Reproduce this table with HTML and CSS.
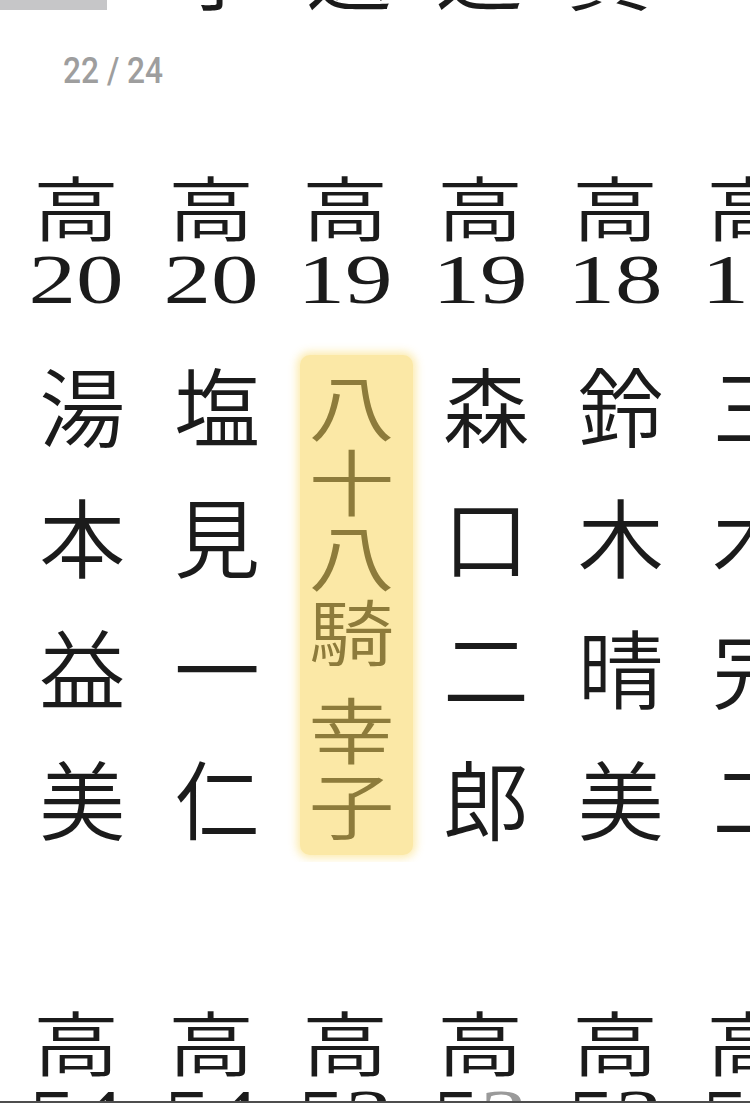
FILE: index.html
```html
<!DOCTYPE html>
<html lang="ja">
<head>
<meta charset="utf-8">
<title>22 / 24</title>
<link rel="stylesheet" href="styles.css">
</head>
<body>
<div class="topbar">
  <div class="tab"></div>
  <div class="title">予選通賞</div>
</div>
<div class="pager"><span>22 / 24</span></div>

<div class="block">
  <div class="col">
    <div class="hk"><span>高</span></div>
    <div class="hn"><span>20</span></div>
    <div class="names"><div>湯</div><div>本</div><div>益</div><div>美</div></div>
  </div>
  <div class="col">
    <div class="hk"><span>高</span></div>
    <div class="hn"><span>20</span></div>
    <div class="names"><div>塩</div><div>見</div><div>一</div><div>仁</div></div>
  </div>
  <div class="col">
    <div class="hk"><span>高</span></div>
    <div class="hn"><span>19</span></div>
    <div class="names">
      <div class="box">
        <div class="c"><span>八</span></div>
        <div class="c"><span>十</span></div>
        <div class="c"><span>八</span></div>
        <div class="c"><span>騎</span></div>
        <div class="gap"></div>
        <div class="c"><span>幸</span></div>
        <div class="c"><span>子</span></div>
      </div>
    </div>
  </div>
  <div class="col">
    <div class="hk"><span>高</span></div>
    <div class="hn"><span>19</span></div>
    <div class="names"><div>森</div><div>口</div><div>二</div><div>郎</div></div>
  </div>
  <div class="col">
    <div class="hk"><span>高</span></div>
    <div class="hn"><span>18</span></div>
    <div class="names"><div>鈴</div><div>木</div><div>晴</div><div>美</div></div>
  </div>
  <div class="col">
    <div class="hk"><span>高</span></div>
    <div class="hn"><span>18</span></div>
    <div class="names"><div>三</div><div>木</div><div>完</div><div>二</div></div>
  </div>
</div>

<div class="block block2">
  <div class="col">
    <div class="hk"><span>高</span></div>
    <div class="hn"><span>54</span></div>
  </div>
  <div class="col">
    <div class="hk"><span>高</span></div>
    <div class="hn"><span>54</span></div>
  </div>
  <div class="col">
    <div class="hk"><span>高</span></div>
    <div class="hn"><span>53</span></div>
  </div>
  <div class="col">
    <div class="hk"><span>高</span></div>
    <div class="hn"><span>5<em class="dim">3</em></span></div>
  </div>
  <div class="col">
    <div class="hk"><span>高</span></div>
    <div class="hn"><span>53</span></div>
  </div>
  <div class="col">
    <div class="hk"><span>高</span></div>
    <div class="hn"><span>52</span></div>
  </div>
</div>

<div class="bottomline"></div>
</body>
</html>
```

FILE: styles.css
```css
html, body {
  margin: 0;
  padding: 0;
  background: #ffffff;
}

body {
  width: 750px;
  height: 1103px;
  overflow: hidden;
  font-family: "Noto Sans CJK JP", "Noto Sans CJK SC", sans-serif;
  font-weight: 350;
  color: #1b1b1b;
}

.topbar {
  display: flex;
  height: 14px;
  overflow: hidden;
}

.tab {
  flex: none;
  width: 107px;
  height: 10px;
  background: #c6c6c8;
}

.title {
  align-self: flex-end;
  margin: 0 0 4px 69px;
  font-size: 86px;
  line-height: 86px;
  letter-spacing: 44px;
  white-space: nowrap;
}

.pager {
  margin: 39px 0 0 63px;
  height: 36px;
  font-family: "Roboto", "Liberation Sans", sans-serif;
  font-weight: 500;
  font-size: 36px;
  line-height: 36px;
  color: #9e9e9e;
}

.pager span {
  display: inline-block;
  transform: scaleX(0.88);
  transform-origin: left center;
}

.block {
  display: flex;
  padding-left: 15px;
  margin-top: 82px;
  overflow: hidden;
}

.block2 {
  margin-top: 144px;
}

.col {
  flex: 0 0 134.6px;
  display: flex;
  flex-direction: column;
}

.hk {
  height: 70px;
  line-height: 70px;
  font-size: 70px;
  text-align: center;
  padding-right: 12px;
}

.hk span {
  display: inline-block;
  transform: scaleX(1.23);
}

.hn {
  margin-top: 4px;
  height: 70px;
  line-height: 70px;
  font-family: "Liberation Serif", serif;
  font-weight: 400;
  font-size: 70px;
  text-align: center;
  padding-right: 12px;
  white-space: nowrap;
}

.hn span {
  display: inline-block;
  transform: scaleX(1.36);
}

.dim {
  font-style: normal;
  color: #9a9a9a;
}

.names {
  margin-top: 23px;
  font-size: 86px;
  line-height: 131px;
  text-align: center;
}

.box {
  box-sizing: border-box;
  width: 113px;
  height: 500px;
  margin: 17px 0 0 16px;
  padding: 10.7px 11px 0 0;
  background: #fbe8a6;
  border-radius: 10px;
  box-shadow: 0 0 8px 3px rgba(251, 231, 160, 0.85);
  color: #8d7b3b;
}

.box .c {
  height: 75px;
  line-height: 75px;
  font-size: 75px;
}

.box .c span {
  display: inline-block;
  transform: scale(1.147, 0.96);
}

.box .gap {
  height: 23px;
}

.bottomline {
  position: fixed;
  left: 0;
  right: 0;
  bottom: 0;
  height: 2px;
  background: #4d4d4d;
}
```
